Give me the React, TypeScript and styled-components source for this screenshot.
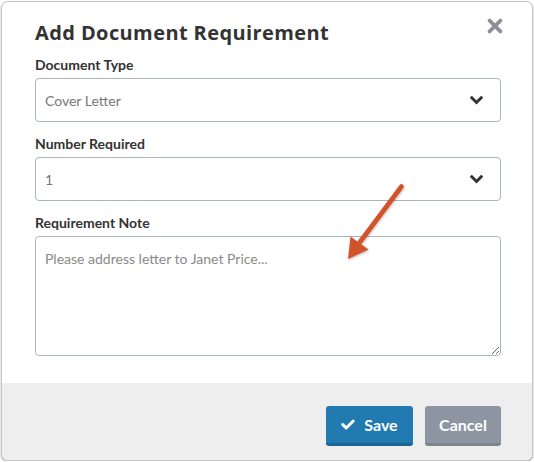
import React from "react";
import styled, { createGlobalStyle } from "styled-components";

const GlobalStyle = createGlobalStyle`
  html, body {
    margin: 0;
    padding: 0;
    background: #ffffff;
  }
  body {
    font-family: Lato, "Open Sans", Arial, sans-serif;
    color: #333333;
  }
  * { box-sizing: border-box; }
`;

const Page = styled.div`
  padding: 1px 0 0 1px;
`;

const Dialog = styled.div`
  position: relative;
  width: 532px;
  height: 460px;
  background: #ffffff;
  border: 1px solid #c6c6c6;
  border-radius: 7px;
  box-shadow: 0 1px 2px rgba(0, 0, 0, 0.35);
  overflow: hidden;
  display: flex;
  flex-direction: column;
`;

const Body = styled.div`
  flex: 1;
  padding: 19px 31px 0 33px;
`;

const Header = styled.div`
  display: flex;
  justify-content: space-between;
  align-items: flex-start;
`;

const Title = styled.h2`
  margin: 0;
  font-family: "Open Sans", Lato, Arial, sans-serif;
  font-size: 20px;
  line-height: 24px;
  font-weight: 700;
  letter-spacing: 0.4px;
  color: #333333;
`;

const CloseButton = styled.button`
  border: 0;
  background: none;
  padding: 0;
  margin: -3px -2px 0 0;
  width: 16px;
  height: 16px;
  cursor: pointer;
  display: flex;
`;

const Field = styled.div<{ $first?: boolean }>`
  margin-top: ${(p) => (p.$first ? "11px" : "13px")};
  display: flex;
  flex-direction: column;
  gap: 4px;
`;

const Label = styled.label`
  font-size: 14px;
  line-height: 18px;
  font-weight: 700;
  color: #333333;
`;

const SelectBox = styled.div`
  height: 44px;
  border: 1px solid #a9b3c1;
  border-radius: 4px;
  padding: 0 17px 0 9px;
  display: flex;
  align-items: center;
  justify-content: space-between;
  font-size: 14px;
  color: #777777;
`;

const TextArea = styled.textarea`
  height: 120px;
  width: 100%;
  border: 1px solid #a9b3c1;
  border-radius: 4px;
  padding: 12px 9px;
  font-family: Lato, "Open Sans", Arial, sans-serif;
  font-size: 14px;
  line-height: 20px;
  color: #333333;
  outline: none;
  resize: vertical;
  display: block;
  &::placeholder {
    color: #8a8a8a;
  }
`;

const Footer = styled.div`
  height: 77px;
  background: #eeeeee;
  display: flex;
  justify-content: flex-end;
  align-items: flex-start;
  gap: 12px;
  padding: 23px 31px 0 0;
`;

const Button = styled.button<{ $variant: "primary" | "muted" }>`
  height: 40px;
  width: ${(p) => (p.$variant === "primary" ? "87px" : "76px")};
  border: 0;
  border-bottom: 3px solid
    ${(p) => (p.$variant === "primary" ? "#1a6594" : "#7d8492")};
  border-radius: 3px;
  background: ${(p) => (p.$variant === "primary" ? "#217ab0" : "#8d95a2")};
  color: #ffffff;
  font-family: Lato, "Open Sans", Arial, sans-serif;
  font-size: 16px;
  font-weight: 700;
  display: flex;
  align-items: center;
  justify-content: center;
  gap: 9px;
  padding: 0;
  cursor: pointer;
`;

const ArrowLayer = styled.svg`
  position: absolute;
  left: 0;
  top: 0;
  pointer-events: none;
`;

const Chevron = () => (
  <svg width="13" height="9" viewBox="0 0 13 9">
    <path
      d="M1.8 1.8 L6.5 6.5 L11.2 1.8"
      fill="none"
      stroke="#333333"
      strokeWidth="3"
      strokeLinecap="square"
    />
  </svg>
);

const CloseIcon = () => (
  <svg width="16" height="16" viewBox="0 0 16 16">
    <path
      d="M2.6 2.6 L13.4 13.4 M13.4 2.6 L2.6 13.4"
      stroke="#8b919c"
      strokeWidth="3.8"
      strokeLinecap="round"
    />
  </svg>
);

const CheckIcon = () => (
  <svg width="14" height="11" viewBox="0 0 14 11">
    <path
      d="M1.8 5.6 L5.2 9 L12.2 2"
      fill="none"
      stroke="#ffffff"
      strokeWidth="3"
      strokeLinecap="round"
      strokeLinejoin="round"
    />
  </svg>
);

export default function App() {
  return (
    <>
      <GlobalStyle />
      <Page>
        <Dialog>
          <Body>
            <Header>
              <Title>Add Document Requirement</Title>
              <CloseButton aria-label="Close">
                <CloseIcon />
              </CloseButton>
            </Header>
            <Field $first>
              <Label>Document Type</Label>
              <SelectBox>
                <span>Cover Letter</span>
                <Chevron />
              </SelectBox>
            </Field>
            <Field>
              <Label>Number Required</Label>
              <SelectBox>
                <span>1</span>
                <Chevron />
              </SelectBox>
            </Field>
            <Field>
              <Label>Requirement Note</Label>
              <TextArea placeholder="Please address letter to Janet Price..." />
            </Field>
          </Body>
          <Footer>
            <Button $variant="primary">
              <CheckIcon />
              Save
            </Button>
            <Button $variant="muted">Cancel</Button>
          </Footer>
          <ArrowLayer width="532" height="460" viewBox="0 0 532 460">
            <defs>
              <filter id="arrowShadow" x="-20%" y="-20%" width="140%" height="140%">
                <feDropShadow dx="0.5" dy="1" stdDeviation="0.8" floodColor="#000" floodOpacity="0.3" />
              </filter>
            </defs>
            <g filter="url(#arrowShadow)">
              <line x1="399.5" y1="184.5" x2="358" y2="240" stroke="#d2532b" strokeWidth="4.6" strokeLinecap="round" />
              <polygon points="346,257 348.5,234.5 366.5,247.5" fill="#d2532b" />
            </g>
          </ArrowLayer>
        </Dialog>
      </Page>
    </>
  );
}
